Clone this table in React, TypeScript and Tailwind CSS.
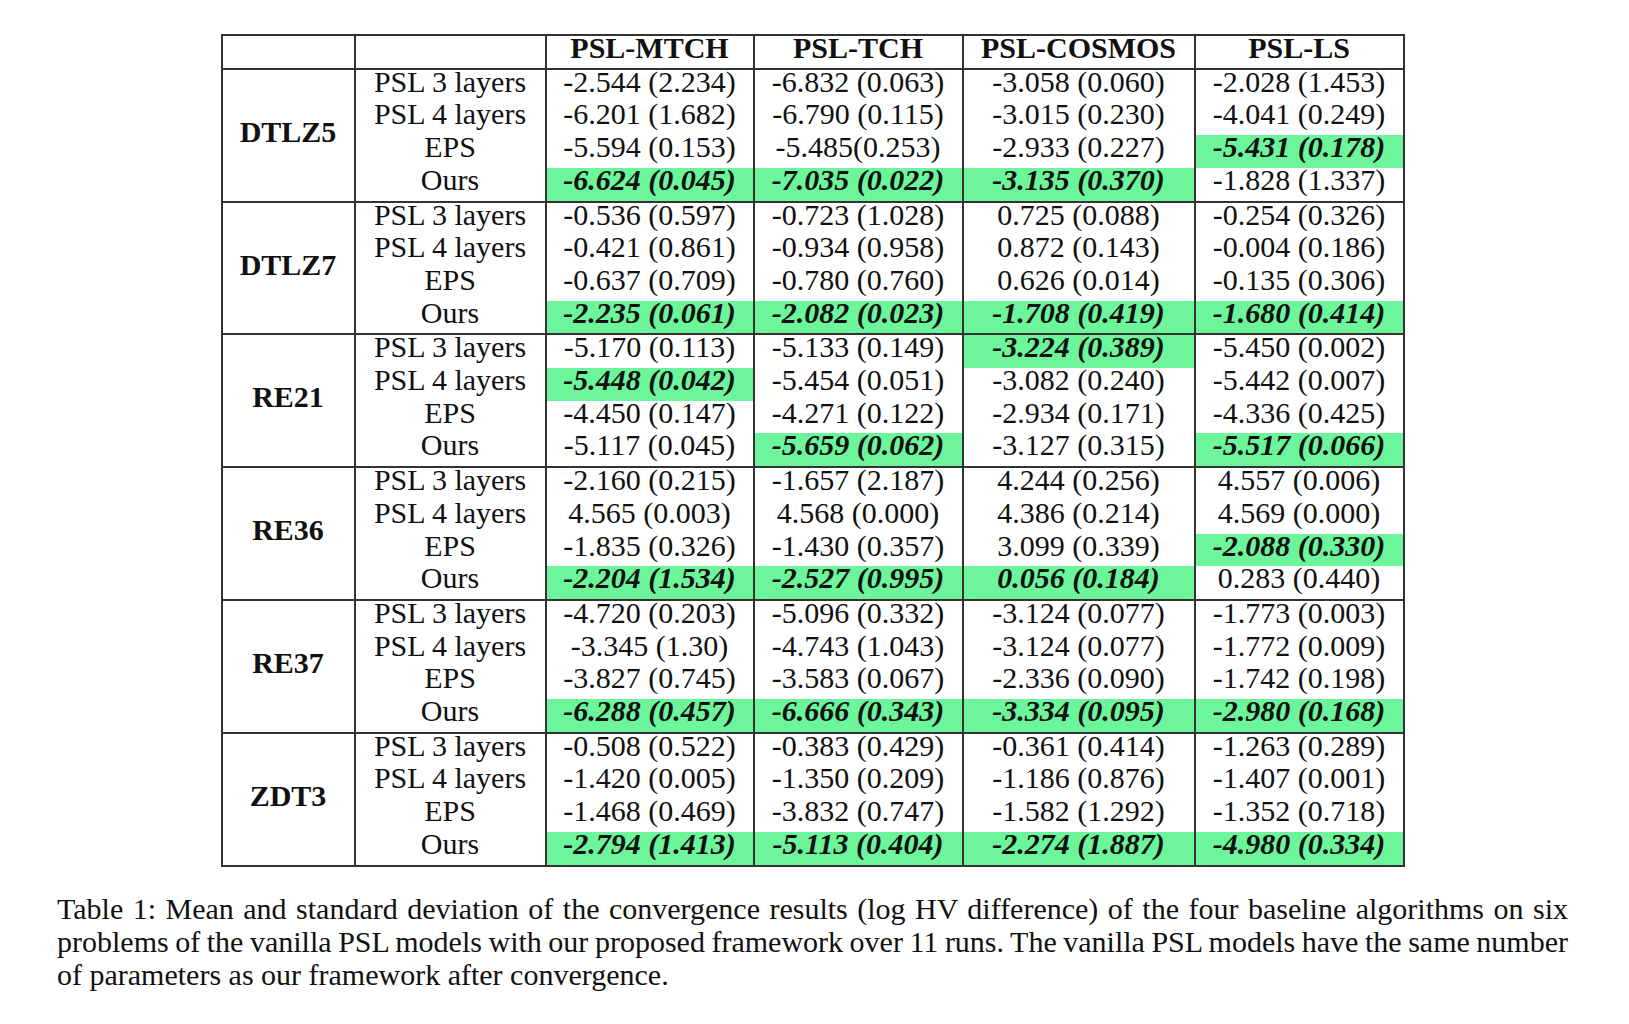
import React from "react";

type Cell = [string, boolean];
type Group = { name: string; rows: { label: string; cells: Cell[] }[] };

const g = (s: string): Cell => [s, true];
const n = (s: string): Cell => [s, false];

const labels = ["PSL 3 layers", "PSL 4 layers", "EPS", "Ours"];

const groups: Group[] = [
  {
    name: "DTLZ5",
    rows: [
      [n("-2.544 (2.234)"), n("-6.832 (0.063)"), n("-3.058 (0.060)"), n("-2.028 (1.453)")],
      [n("-6.201 (1.682)"), n("-6.790 (0.115)"), n("-3.015 (0.230)"), n("-4.041 (0.249)")],
      [n("-5.594 (0.153)"), n("-5.485(0.253)"), n("-2.933 (0.227)"), g("-5.431 (0.178)")],
      [g("-6.624 (0.045)"), g("-7.035 (0.022)"), g("-3.135 (0.370)"), n("-1.828 (1.337)")],
    ].map((cells, i) => ({ label: labels[i], cells })),
  },
  {
    name: "DTLZ7",
    rows: [
      [n("-0.536 (0.597)"), n("-0.723 (1.028)"), n("0.725 (0.088)"), n("-0.254 (0.326)")],
      [n("-0.421 (0.861)"), n("-0.934 (0.958)"), n("0.872 (0.143)"), n("-0.004 (0.186)")],
      [n("-0.637 (0.709)"), n("-0.780 (0.760)"), n("0.626 (0.014)"), n("-0.135 (0.306)")],
      [g("-2.235 (0.061)"), g("-2.082 (0.023)"), g("-1.708 (0.419)"), g("-1.680 (0.414)")],
    ].map((cells, i) => ({ label: labels[i], cells })),
  },
  {
    name: "RE21",
    rows: [
      [n("-5.170 (0.113)"), n("-5.133 (0.149)"), g("-3.224 (0.389)"), n("-5.450 (0.002)")],
      [g("-5.448 (0.042)"), n("-5.454 (0.051)"), n("-3.082 (0.240)"), n("-5.442 (0.007)")],
      [n("-4.450 (0.147)"), n("-4.271 (0.122)"), n("-2.934 (0.171)"), n("-4.336 (0.425)")],
      [n("-5.117 (0.045)"), g("-5.659 (0.062)"), n("-3.127 (0.315)"), g("-5.517 (0.066)")],
    ].map((cells, i) => ({ label: labels[i], cells })),
  },
  {
    name: "RE36",
    rows: [
      [n("-2.160 (0.215)"), n("-1.657 (2.187)"), n("4.244 (0.256)"), n("4.557 (0.006)")],
      [n("4.565 (0.003)"), n("4.568 (0.000)"), n("4.386 (0.214)"), n("4.569 (0.000)")],
      [n("-1.835 (0.326)"), n("-1.430 (0.357)"), n("3.099 (0.339)"), g("-2.088 (0.330)")],
      [g("-2.204 (1.534)"), g("-2.527 (0.995)"), g("0.056 (0.184)"), n("0.283 (0.440)")],
    ].map((cells, i) => ({ label: labels[i], cells })),
  },
  {
    name: "RE37",
    rows: [
      [n("-4.720 (0.203)"), n("-5.096 (0.332)"), n("-3.124 (0.077)"), n("-1.773 (0.003)")],
      [n("-3.345 (1.30)"), n("-4.743 (1.043)"), n("-3.124 (0.077)"), n("-1.772 (0.009)")],
      [n("-3.827 (0.745)"), n("-3.583 (0.067)"), n("-2.336 (0.090)"), n("-1.742 (0.198)")],
      [g("-6.288 (0.457)"), g("-6.666 (0.343)"), g("-3.334 (0.095)"), g("-2.980 (0.168)")],
    ].map((cells, i) => ({ label: labels[i], cells })),
  },
  {
    name: "ZDT3",
    rows: [
      [n("-0.508 (0.522)"), n("-0.383 (0.429)"), n("-0.361 (0.414)"), n("-1.263 (0.289)")],
      [n("-1.420 (0.005)"), n("-1.350 (0.209)"), n("-1.186 (0.876)"), n("-1.407 (0.001)")],
      [n("-1.468 (0.469)"), n("-3.832 (0.747)"), n("-1.582 (1.292)"), n("-1.352 (0.718)")],
      [g("-2.794 (1.413)"), g("-5.113 (0.404)"), g("-2.274 (1.887)"), g("-4.980 (0.334)")],
    ].map((cells, i) => ({ label: labels[i], cells })),
  },
];

const headers = ["PSL-MTCH", "PSL-TCH", "PSL-COSMOS", "PSL-LS"];

export default function App() {
  return (
    <div className="min-h-screen w-full bg-white text-[#111] font-['Liberation_Serif','Times_New_Roman',serif]">
      <div className="ml-[57px] w-[1511px] pt-[34px]">
        <table className="mx-auto w-[1182px] table-fixed border-collapse text-[30px] leading-[24.7px]">
          <colgroup>
            <col className="w-[133px]" />
            <col className="w-[191px]" />
            <col className="w-[208px]" />
            <col className="w-[209px]" />
            <col className="w-[232px]" />
            <col className="w-[209px]" />
          </colgroup>
          <thead>
            <tr className="h-[33px]">
              <th className="border-2 border-[#333] p-0"></th>
              <th className="border-2 border-[#333] p-0"></th>
              {headers.map((h) => (
                <th key={h} className="border-2 border-[#333] p-0 pb-[7px] text-center font-bold">
                  {h}
                </th>
              ))}
            </tr>
          </thead>
          <tbody>
            {groups.map((grp) =>
              grp.rows.map((row, ri) => (
                <tr
                  key={grp.name + ri}
                  className={ri === 3 ? "h-[32.7px] border-b-2 border-[#333]" : "h-[32.7px]"}
                >
                  {ri === 0 && (
                    <td
                      rowSpan={4}
                      className="border-2 border-[#333] p-0 pb-[6px] text-center align-middle font-bold"
                    >
                      {grp.name}
                    </td>
                  )}
                  <td className="border-x-2 border-[#333] p-0 pb-[8px] text-center whitespace-nowrap">
                    {row.label}
                  </td>
                  {row.cells.map(([v, hi], ci) => (
                    <td
                      key={ci}
                      className={
                        hi
                          ? "border-x-2 border-[#333] bg-[#6cf59b] p-0 pb-[8px] text-center font-bold italic whitespace-nowrap"
                          : "border-x-2 border-[#333] p-0 pb-[8px] text-center whitespace-nowrap"
                      }
                    >
                      {v}
                    </td>
                  ))}
                </tr>
              ))
            )}
          </tbody>
        </table>
        <div className="mt-[25px] text-[30px] leading-[33.2px] text-[#111]">
          <p className="whitespace-nowrap text-justify [text-align-last:justify] [word-spacing:-3px]">
            Table 1: Mean and standard deviation of the convergence results (log HV difference) of the four baseline algorithms on six
          </p>
          <p className="whitespace-nowrap text-justify [text-align-last:justify] [word-spacing:-6px]">
            problems of the vanilla PSL models with our proposed framework over 11 runs. The vanilla PSL models have the same number
          </p>
          <p className="whitespace-nowrap">of parameters as our framework after convergence.</p>
        </div>
      </div>
    </div>
  );
}
